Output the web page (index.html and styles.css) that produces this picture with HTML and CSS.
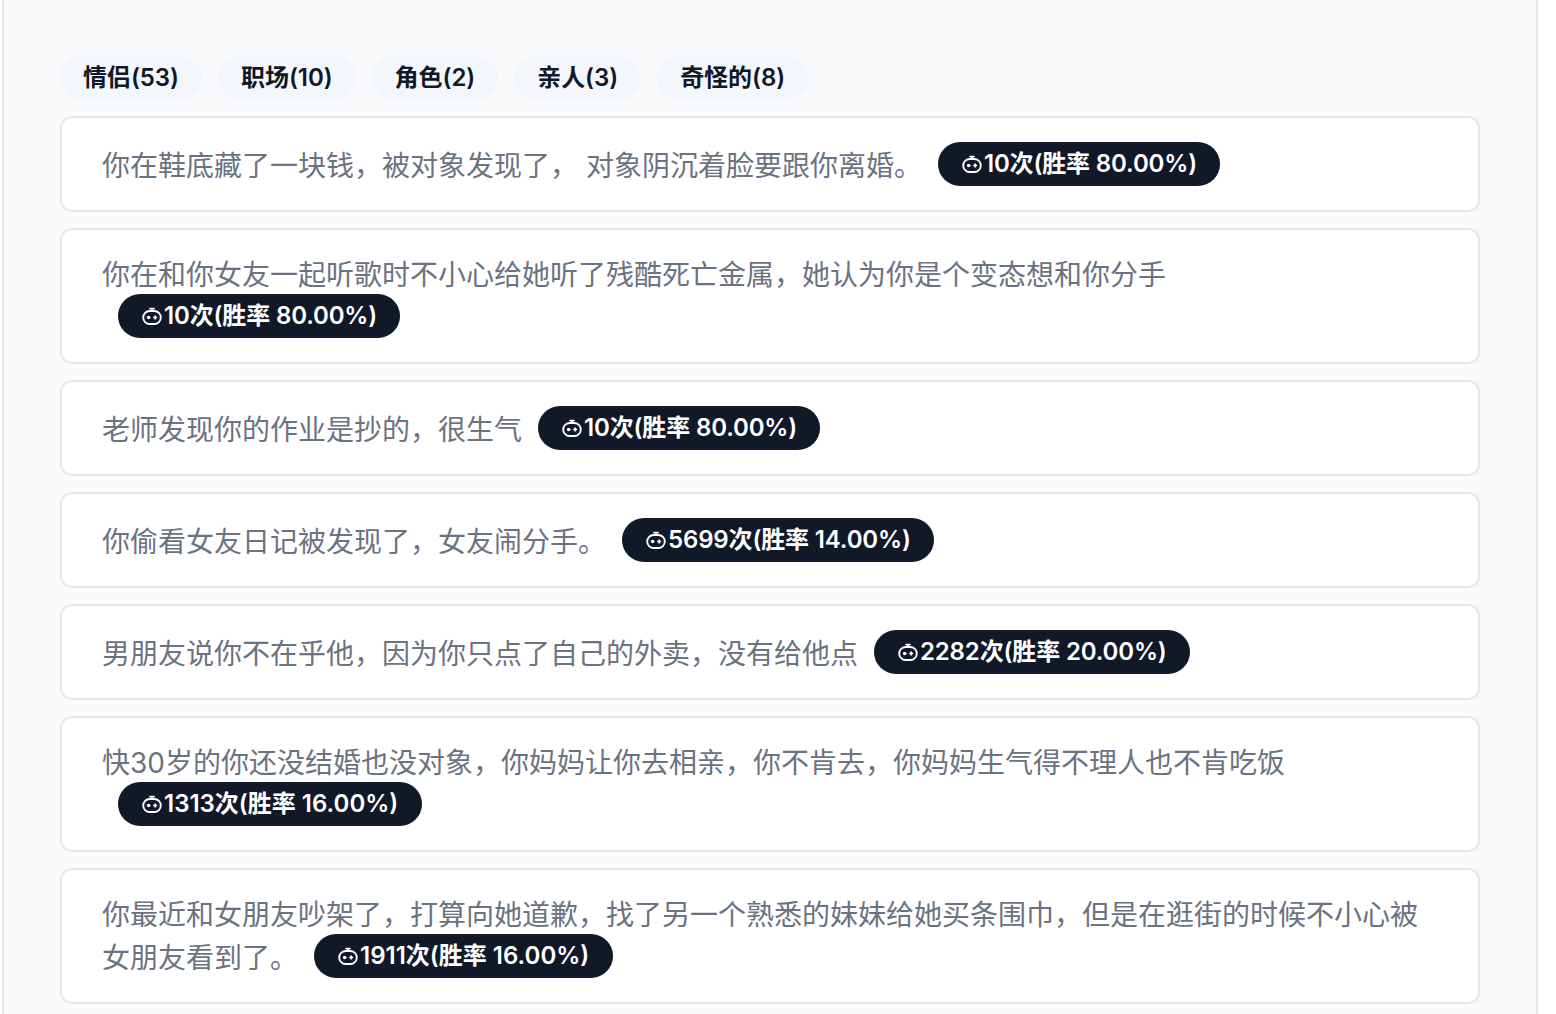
FILE: index.html
```html
<!DOCTYPE html>
<html lang="zh-CN">
<head>
<meta charset="utf-8">
<title>场景</title>
<link rel="stylesheet" href="styles.css">
</head>
<body>
<svg class="defs" width="0" height="0" aria-hidden="true">
  <symbol id="bot" viewBox="0 0 20 20">
    <path d="M8 2.6h4M10 2.6v2.4" fill="none" stroke="currentColor" stroke-width="1.7" stroke-linecap="round"/>
    <rect x="1.2" y="5" width="17.6" height="13" rx="6.5" fill="none" stroke="currentColor" stroke-width="1.9"/>
    <circle cx="6.7" cy="11.5" r="1.8" fill="currentColor"/>
    <path d="M11.2 11.5h4M13.2 9.6v3.8" stroke="currentColor" stroke-width="1.7"/>
  </symbol>
</svg>
<main class="page">
  <nav class="tabs">
    <span class="tab">情侣(53)</span>
    <span class="tab">职场(10)</span>
    <span class="tab">角色(2)</span>
    <span class="tab">亲人(3)</span>
    <span class="tab">奇怪的(8)</span>
  </nav>
  <section class="list">
    <article class="card">你在鞋底藏了一块钱，被对象发现了， 对象阴沉着脸要跟你离婚。<span class="badge"><svg class="bot"><use href="#bot"/></svg>10次(胜率 80.00%)</span></article>
    <article class="card">你在和你女友一起听歌时不小心给她听了残酷死亡金属，她认为你是个变态想和你分手<span class="badge"><svg class="bot"><use href="#bot"/></svg>10次(胜率 80.00%)</span></article>
    <article class="card">老师发现你的作业是抄的，很生气<span class="badge"><svg class="bot"><use href="#bot"/></svg>10次(胜率 80.00%)</span></article>
    <article class="card">你偷看女友日记被发现了，女友闹分手。<span class="badge"><svg class="bot"><use href="#bot"/></svg>5699次(胜率 14.00%)</span></article>
    <article class="card">男朋友说你不在乎他，因为你只点了自己的外卖，没有给他点<span class="badge"><svg class="bot"><use href="#bot"/></svg>2282次(胜率 20.00%)</span></article>
    <article class="card">快30岁的你还没结婚也没对象，你妈妈让你去相亲，你不肯去，你妈妈生气得不理人也不肯吃饭<span class="badge badge-ones"><svg class="bot"><use href="#bot"/></svg>1313次(胜率 16.00%)</span></article>
    <article class="card">你最近和女朋友吵架了，打算向她道歉，找了另一个熟悉的妹妹给她买条围巾，但是在逛街的时候不小心被女朋友看到了。<span class="badge badge-ones"><svg class="bot"><use href="#bot"/></svg>1911次(胜率 16.00%)</span></article>
  </section>
</main>
</body>
</html>
```
FILE: styles.css
```css
* { box-sizing: border-box; }
html, body { margin: 0; height: 1014px; overflow: hidden; background: #fff; }
body { font-family: Inter, "Noto Sans CJK SC", sans-serif; padding-left: 2px; }
.defs { position: absolute; }
.page {
  width: 1536px;
  height: 1014px;
  background: #f9fafc;
  border-left: 2px solid #e5e7eb;
  border-right: 2px solid #e5e7eb;
  padding: 56px 56px 0;
}
.tabs { display: flex; gap: 16px; margin-bottom: 16px; }
.tab {
  height: 44px;
  padding: 0 23px;
  border-radius: 22px;
  background: #f3f6fa;
  color: #111827;
  font-size: 24px;
  font-weight: 600;
  line-height: 44px;
  letter-spacing: -0.05px;
}
.list { display: flex; flex-direction: column; gap: 16px; }
.card {
  background: #fff;
  border: 2px solid #e5e7eb;
  border-radius: 12px;
  padding: 25px 40px 24px;
  color: #6b7280;
  font-size: 28px;
  line-height: 40px;
}
.badge {
  display: inline-flex;
  align-items: center;
  height: 44px;
  margin: -1px 0 0 16px;
  vertical-align: 2px;
  padding: 0 23px 0 24px;
  border-radius: 22px;
  background: #111827;
  color: #fff;
  font-size: 24px;
  font-weight: 600;
  line-height: 32px;
  letter-spacing: -0.15px;
}
.badge-ones { letter-spacing: 0; padding-right: 24px; }
.bot { width: 20px; height: 20px; margin-right: 2px; }
```
